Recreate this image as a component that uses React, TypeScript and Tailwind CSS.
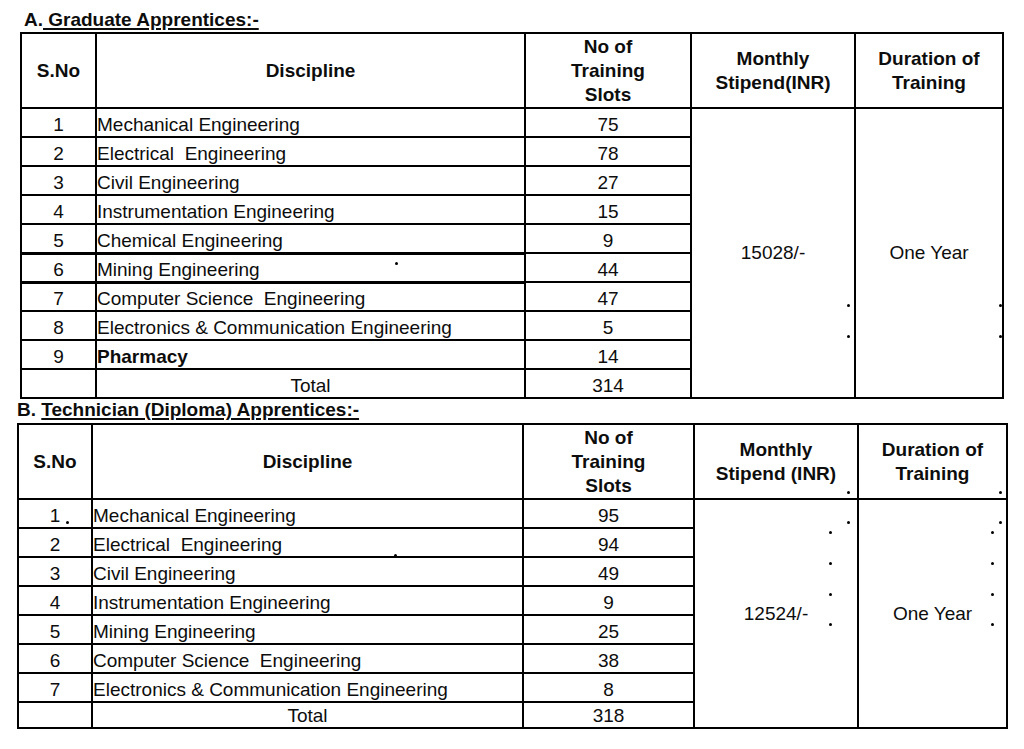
import React from 'react';

type Row = { no: string; name: string; slots: string; bold?: boolean; thick?: boolean };

const graduate: Row[] = [
  { no: '1', name: 'Mechanical Engineering', slots: '75' },
  { no: '2', name: 'Electrical  Engineering', slots: '78' },
  { no: '3', name: 'Civil Engineering', slots: '27' },
  { no: '4', name: 'Instrumentation Engineering', slots: '15' },
  { no: '5', name: 'Chemical Engineering', slots: '9' },
  { no: '6', name: 'Mining Engineering', slots: '44', thick: true },
  { no: '7', name: 'Computer Science  Engineering', slots: '47' },
  { no: '8', name: 'Electronics & Communication Engineering', slots: '5' },
  { no: '9', name: 'Pharmacy', slots: '14', bold: true },
];

const technician: Row[] = [
  { no: '1', name: 'Mechanical Engineering', slots: '95' },
  { no: '2', name: 'Electrical  Engineering', slots: '94' },
  { no: '3', name: 'Civil Engineering', slots: '49' },
  { no: '4', name: 'Instrumentation Engineering', slots: '9' },
  { no: '5', name: 'Mining Engineering', slots: '25' },
  { no: '6', name: 'Computer Science  Engineering', slots: '38' },
  { no: '7', name: 'Electronics & Communication Engineering', slots: '8' },
];

// stray specks from the scanned pdf
const dots: [number, number][] = [
  [396, 263], [848, 305], [848, 336], [1000, 305], [1000, 336],
  [848, 492], [1000, 492], [67, 522], [395, 555],
  [848, 522], [830, 532], [830, 563], [830, 594], [830, 624],
  [1000, 522], [992, 532], [992, 563], [992, 594], [992, 624],
];

const cell = 'border-2 border-black';

function ApprenticeTable({
  rows, total, stipend, widths, stipendLabel, lastRowH,
}: {
  rows: Row[]; total: string; stipend: string; widths: number[]; stipendLabel: string; lastRowH: string;
}) {
  return (
    <table className="border-collapse table-fixed" style={{ width: widths.reduce((a, b) => a + b, 0) }}>
      <colgroup>
        {widths.map((w, i) => <col key={i} style={{ width: w }} />)}
      </colgroup>
      <thead>
        <tr className="h-[75px] font-bold leading-[24px]">
          <th className={`${cell} align-middle text-center font-bold`}>S.No</th>
          <th className={`${cell} align-middle text-center font-bold`}>Discipline</th>
          <th className={`${cell} align-middle text-center font-bold`}>No of<br />Training<br />Slots</th>
          <th className={`${cell} align-middle text-center font-bold`}>Monthly<br />{stipendLabel}</th>
          <th className={`${cell} align-middle text-center font-bold`}>Duration of<br />Training</th>
        </tr>
      </thead>
      <tbody className="leading-[22px]">
        {rows.map((r, i) => (
          <tr key={r.no} className="h-[29px]">
            <td className={`${cell} ${r.thick ? 'border-y-[3px]' : ''} align-bottom text-center`}>{r.no}</td>
            <td className={`${cell} ${r.thick ? 'border-y-[3px]' : ''} align-bottom whitespace-pre ${r.bold ? 'font-bold' : ''}`}>{r.name}</td>
            <td className={`${cell} align-bottom text-center`}>{r.slots}</td>
            {i === 0 && (
              <>
                <td rowSpan={rows.length + 1} className={`${cell} align-middle text-center`}>{stipend}</td>
                <td rowSpan={rows.length + 1} className={`${cell} align-middle text-center`}>One Year</td>
              </>
            )}
          </tr>
        ))}
        <tr className={lastRowH}>
          <td className={cell}></td>
          <td className={`${cell} align-bottom text-center`}>Total</td>
          <td className={`${cell} align-bottom text-center`}>{total}</td>
        </tr>
      </tbody>
    </table>
  );
}

export default function App() {
  return (
    <div
      className="relative min-h-[749px] w-[1024px] bg-white text-[19px] text-[#0d0d0d]"
      style={{ fontFamily: '"Liberation Sans", Arial, sans-serif' }}
    >
      <div className="h-[32px] pl-[24px] pt-[9px] font-bold leading-[22px]">
        A.<span className="underline decoration-[1.5px] underline-offset-[2px]"> Graduate Apprentices:-</span>
      </div>
      <div className="pl-[20px]">
        <ApprenticeTable
          rows={graduate}
          total="314"
          stipend="15028/-"
          stipendLabel="Stipend(INR)"
          widths={[75, 429, 166, 164, 148]}
          lastRowH="h-[29px]"
        />
      </div>
      <div className="h-[24px] pl-[17px] font-bold leading-[22px]">
        B. <span className="underline decoration-[1.5px] underline-offset-[2px]">Technician (Diploma) Apprentices:-</span>
      </div>
      <div className="pl-[17px]">
        <ApprenticeTable
          rows={technician}
          total="318"
          stipend="12524/-"
          stipendLabel="Stipend (INR)"
          widths={[74, 431, 171, 164, 149]}
          lastRowH="h-[26px]"
        />
      </div>
      {dots.map(([x, y], i) => (
        <span
          key={i}
          className="absolute h-[3px] w-[3px] rounded-full bg-black"
          style={{ left: x - 1, top: y - 1 }}
        />
      ))}
    </div>
  );
}
